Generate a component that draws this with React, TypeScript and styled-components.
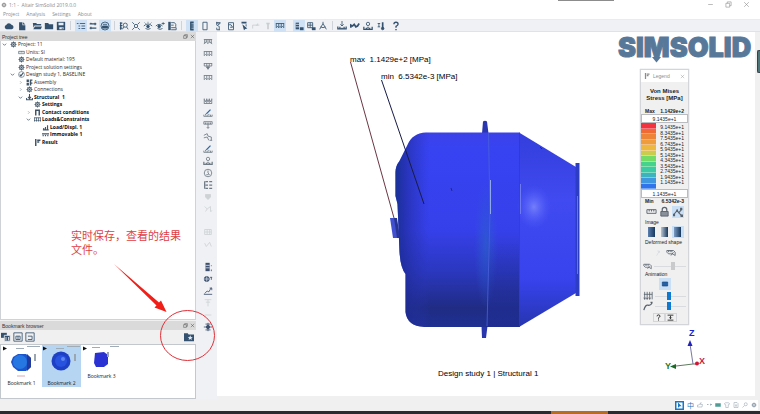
import React from 'react';
import styled, { createGlobalStyle, css } from 'styled-components';

const sans = '"Liberation Sans", Arial, sans-serif';
const ui = '"Open Sans", "Noto Sans", sans-serif';
const navy = '#34526f';

const GlobalStyle = createGlobalStyle`
  *, *::before, *::after { box-sizing: border-box; }
  html, body { margin: 0; background: #fff; }
  button, input { font: inherit; color: inherit; margin: 0; }
  ul, h1, h2, p { margin: 0; padding: 0; list-style: none; font-weight: inherit; font-size: inherit; }
`;

/* ---------- icons, all on a 12 x 12 grid ---------- */

const coil = 'M1 3h10M1.5 3v5l1.500-1.500L4.500 8V3M4.500 8 6 6.500 7.500 8V3M7.500 8 9 6.500 10.500 8V3';
const icons: Record<string, React.ReactNode> = {
  cloud: <path fill="currentColor" stroke="none" d="M3 10a2.700 2.700 0 0 1-.3-5.200A3.500 3.500 0 0 1 9 4.500 2.800 2.800 0 0 1 9.300 10z" />,
  file: <path fill="currentColor" stroke="none" d="M2.500 1.500h4v3.500h3.500v6H2.500zM7.300 1.500 10 4.200H7.300z" />,
  open: <path fill="currentColor" stroke="none" d="M1 2.500h4l1 1h5v2H3L1.800 8zM3.500 6.500H12L10.500 10H1.500z" />,
  folder: <path fill="currentColor" stroke="none" d="M1 2.500h4l1 1.300h5V10H1z" />,
  save: <><path fill="currentColor" stroke="none" d="M1 1h10v10H1z" /><path fill="#e6eff7" stroke="none" d="M3 2h6v3H3zM4 7.500h5V10H4z" /><path d="M7.500 8v2" /></>,
  list: <path d="M1 3h2M4.500 3H11M3 6h2M6.500 6H11M3 9h2M6.500 9H11" />,
  swap: <path strokeWidth="1.400" d="M2 3.500h8M8.500 2v3M2 8.500h8M3.500 7v3M4.500 3.500 3 2.500" />,
  display: <><circle cx="6" cy="6" r="4.800" /><path fill="currentColor" d="M3 6h6v2.500H3z" /><path d="M3.500 4h5" /></>,
  lens: <><path strokeWidth="1.400" d="M2 1.500v9M1 2.500h3M1 5.500h3M1 8.500h3" /><circle cx="7.500" cy="5" r="2.500" /><path d="m9 7 2 3M4 10l2-3" /></>,
  cross: <><path d="M1.500 1.500 4 4M10.500 1.500 8 4M1.500 10.500 4 8M10.500 10.500 8 8" /><circle cx="6" cy="6" r="2" /></>,
  eye: <><path d="M1 6q5-5 10 0M3 9q3 2 6 0M3 3l-1-1M6 2V1M9 3l1-1" /><circle cx="6" cy="6.500" r="1.600" fill="currentColor" /></>,
  eyeArrow: <><path d="M1 6q4-4 8 0M3 9q3 2 6 0M8 3h3M9.500 1.500 11 3 9.500 4.500" /><circle cx="5" cy="6.500" r="1.600" fill="currentColor" /></>,
  sheet: <><path fill="currentColor" stroke="none" d="M1.500 1h3v10h-3z" /><path d="M5 2h4l1.500 2v3M5 10.500h6V8H5M5 5h3" /></>,
  spring: <path strokeWidth="1.600" d="M4 1.500h4M4 3.700h4M4 6h4M4 8.300h4M4 10.500h4M4.500 1v10" />,
  column: <path d="M3.500 1.500h5v9h-5z" />,
  stack: <><path fill="currentColor" stroke="none" d="M4 1.500h5v1.500H4z" /><path d="M4.500 1v4l3 1.500V11M8.500 3 6 4.500M8 10.500H4.500V8" /></>,
  probe: <path d="M3 2h6v8.500H3zM3 4.500h3l2 3H5" />,
  pick: <path fill="currentColor" stroke="none" d="M3 1h6v2H3zM4 4l6 5-2.500.5L6 11zM8 4h1v3L8 6z" />,
  faint: <path d="M2 9V5h6V3M6 5h4" />,
  faintBar: <path strokeWidth="2" d="M6 2v8M4 3h4" />,
  coil: <path d={coil} />,
  tall: <path d="M1.500 3v5.500M4.500 3v5.500M7.500 3v5.500M10.500 3v5.500M1 9h10M1.500 4 3 7l1.500-3L6 7l1.500-3L9 7l1.500-3" />,
  load: <><path fill="currentColor" stroke="none" d="M2 2h4v8H2z" /><path stroke="#dce9f5" d="M2 4h4M2 7h4" /><path fill="currentColor" stroke="none" d="M7 7.500h4.500V11H7z" /></>,
  loadAlt: <><path d="M2 2h6v6H2zM2 5h6M5 2v6" /><path fill="currentColor" stroke="none" d="M7 7.500h4.500V11H7z" /></>,
  compass: <path d="M6 1v2M6 3 2 10M6 3l4 7M3 7q3 2 6 0" />,
  gravity: <><path d="M6 0v6M4 4l2 2 2-2" /><path strokeWidth="1.500" d="M1 6.500v3h10v-3M3.500 7v2M6 8v2M8.500 7v2" /></>,
  wave: <path strokeWidth="2" d="M1 8V5l2 1 2-2 2 3 2-1 2-3" />,
  gearLoad: <><circle cx="6" cy="3.500" r="2" /><path strokeWidth="1.500" d="M1 7v3h10V7M4 8v2M6 7v2M8 8v2" /></>,
  thermo: <><path strokeWidth="2" d="M8 1.500V9" /><circle cx="8" cy="9" r="1.500" fill="currentColor" /><path d="M2 3h3M3.500 3v4M2 7h3" /></>,
  help: <><path strokeWidth="1.600" d="M3.500 4q0-2.500 2.500-2.500T8.500 4Q8.500 5.200 6 6.500V8" /><path strokeWidth="1.700" d="M6 9.500v1.600" /></>,
  drop: <><path d="M1 3h10M1.500 3v3h9V3M4.500 3v3M7.500 3v3" /><path fill="currentColor" d="m4 7 2 3 2-3z" /></>,
  ground: <path d="M1 3h10M2 3v5M4 3v3M6 3v4M8 3v3M10 3v5M1 8l3-2 2 2 2-2 3 2" />,
  bolt: <><path d="M1 8v2h10V8M3 7v2M5 8v2M7 7v2M9 8v2" /><path stroke="#2b64a5" strokeWidth="1.500" d="M4 7l5-5" /></>,
  pin: <path d="M1 2h10v3H1zM3 3v2M5 3v2M7 3v2M9 3v2M6 5v5M4.500 8.500 6 10l1.500-1.500" />,
  hinge: <path d="M1 4l4-2 1 3 4 1v4M1 7l4-1 2 4M8 10h3" />,
  ring: <><circle cx="6" cy="6" r="4.500" /><path d="M6 3v3l2 2M4 8h3" /></>,
  rows: <path strokeWidth="1.500" d="M2 1.500v9M3 2h3M3 6h3M3 10h3M7.500 2H11M7.500 6H11M7.500 10H11" />,
  shield: <path fill="currentColor" d="M3 3h6v3L6 9 3 6z" />,
  sketch: <path d="M2 3l3 3-2 3M5 6l4-3v6l2-1" />,
  grid: <path d="M2 3h8v6H2zM5 3v6M8 3v6M2 6h8" />,
  tick: <path d="M2 5l2 4 4-5 2 5" />,
  result: <><path fill="currentColor" stroke="none" d="M3 1h5v10H3z" /><path stroke="#dbe5f0" d="M3 4h5M3 7h5" /><path d="M10 4v1M10 9v2" /></>,
  globe: <><circle cx="4.500" cy="6" r="3" fill="currentColor" /><path stroke="#c9d5e6" d="M1.500 6h6M4.500 3v6" /><path d="M8.500 4H11M10 4v3" /></>,
  graph: <path d="M1 10h10M2 9l3-3 2 1 3-5M8 2.500h2.500V5" />,
  tee: <path d="M2 2h8M6 2v8M3.500 5h5" />,
  dash: <path d="M2 6h8" />,
  target: <><circle cx="6" cy="6" r="2" fill="currentColor" /><path d="M6 1v10M1 6h10M3 2.500h6M3 9.500h6" /></>,
  gear: <><circle cx="6" cy="6" r="3.200" strokeWidth="1.800" /><circle cx="6" cy="6" r="1" fill="currentColor" /><path d="M6 .5v2M6 9.500v2M.5 6h2M9.500 6h2M2 2l1.500 1.500M8.500 8.500 10 10M10 2 8.500 3.500M3.500 8.500 2 10" /></>,
  ruler: <path d="M1 4h10v4H1zM3.500 4v2M6 4v2M8.500 4v2" />,
  study: <><circle cx="6" cy="6" r="5" /><path strokeWidth="2" d="m3 6 2 2.500L9 3" /></>,
  parts: <path fill="currentColor" stroke="none" d="M1 1h4v4H1zM1 6.500h4V11H1zM6.500 1H11v2H9v3h2v2H9v3H6.500z" />,
  anchor: <path strokeWidth="1.800" d="M6 0v8M3.500 5 6 8l2.500-3M1 7v3h10V7" />,
  contact: <path strokeWidth="2.500" d="M3 1v10M9 1v10M3 2h6" />,
  loads: <path strokeWidth="1.300" d="M0 3h12M1 3v6M4.300 3v6M7.600 3v6M11 3v6M0 7l1 2 1-2M3.300 7l1 2 1-2M6.600 7l1 2 1-2M10 7l1 2 1-2" />,
  bars: <path strokeWidth="2" d="M1.500 10h10M3 9V7M6 9V5M9.500 9V2" />,
  fixed: <path strokeWidth="2" d="M0 5h12M1 8h2M5 8h2M9 8h2" />,
  flag: <path strokeWidth="2.500" d="M3 0v12M5.500 2H11M5.500 5H9" />,
  copy: <><path fill="currentColor" stroke="none" d="M0 1h7v6H0z" /><path fill="currentColor" stroke="#eee" d="M4 4h7v7H4z" /><path stroke="#eee" d="M6 6v4M9 6v4" /></>,
  windowFull: <path d="M1 1h10v10H1zM3.500 5h5v4h-5zM6 5v4" />,
  windowPart: <path d="M1 1h10v10H1zM3.500 5h5M8.500 5v4M3.500 9h5" />,
  camera: <><path fill="currentColor" stroke="none" d="M0 1.500h4.500l1 1.500H12v8H0z" /><path fill="#dce9f5" stroke="none" d="m7.500 4 .9 2 2.100.2-1.600 1.300.5 2-1.900-1.100-1.900 1.100.5-2L4.500 6.200l2.100-.2z" /></>,
  lock: <><path strokeWidth="1.300" d="M3.500 6V4a2.500 2.500 0 0 1 5 0v2" /><path d="M2 6h8v5H2z" fill="#89909a" /></>,
  nodes: <><path strokeWidth="1.300" d="M1 9 5 4l2 3 4-5M7 7l3 3" /><path fill="currentColor" stroke="none" d="M8.500 1H11v3H8.500zM9 9h3v3H9zM0 8h2.500v3H0zM4 3h2v2H4z" /></>,
  deform: <path d="M1 3h8l2 2v4L8 7H3L1 5zM3 3v2M5 3v2M7 3v2M6 9l3-4" />,
  ghost: <path stroke="#d5d7da" d="M4 10 8 3M5 3h3v3" />,
  arrows: <path d="M2 1v9M5 1v9M8 1v9M11 1v9M1 4h10M1 8l1 2 1-2M4 8l1 2 1-2M7 8l1 2 1-2" />,
  curve: <path strokeWidth="1.500" d="M1 11q2-7 5-6t5-3M9 1.500h2.500" />,
  stop: <path fill="#2561a6" stroke="#17457d" d="M2 3h8v6H2z" />,
  down: <path strokeWidth="1.500" d="M1 2h10M6 3v5M4 6l2 2 2-2M1 10.500h10" />,
  restore: <path d="M1.500 4h6.500v6.500H1.500zM4 4V1.500h6.500V8H8" />,
  close: <path d="m2 2 8 8M10 2l-8 8" />,
  minimize: <path d="M2 6h8" />,
  chevronDown: <path strokeWidth="1.800" d="m2 4 4 4 4-4" />,
  chevronRight: <path d="m5 3 3 3-3 3" />,
  cursor: <><path fill="#1978c2" stroke="none" d="M0 0h12v12H0z" /><path fill="#fff" stroke="none" d="M2 2h8v8H2z" /><path fill="#1978c2" stroke="none" d="m4 2 5 5H6.500L4 9z" /></>,
  thumb: <path d="M1 10h9l1-5H7l1-4-4 5H1z" />,
  quote: <path strokeWidth="1.500" d="M2 5h3M8 4h1v3M11 4v2" />,
  keyboard: <path fill="#4f9d94" stroke="#4f9d94" d="M1 3h10v6H1z" />,
  shirt: <path d="m4 1-3 2 1.500 3 1-.5V11h5V5.500l1 .5L11 3 8 1Q6 3 4 1z" />,
  doc: <path d="M3 1h5l2 2v8H2V1zM4 6h4M4 8h4" />,
  search: <><circle cx="7.500" cy="4.500" r="3" /><path d="m5 7-4 4" /></>,
};

const Svg = styled.svg<{ $size: number }>`
  display: block;
  flex: none;
  width: ${p => p.$size}px;
  height: ${p => p.$size}px;
  fill: none;
  stroke: currentColor;
`;
const Icon = ({ name, size = 10 }: { name: string; size?: number }) => (
  <Svg viewBox="0 0 12 12" $size={size} aria-hidden="true">{icons[name]}</Svg>
);

/* ---------- window frame ---------- */

const Window = styled.div`
  position: relative;
  display: flex;
  flex-direction: column;
  min-height: 100vh;
  background: #f0f0f0;
  font-family: ${ui};
  font-size: 5px;
  line-height: 8px;
  color: #1c1c1c;
`;
const TitleBar = styled.header`
  display: flex;
  align-items: center;
  gap: 2px;
  height: 9px;
  padding: 0 10px 0 1px;
  background: #fff;
  color: #8c8c8c;
`;
const Title = styled.h1`
  flex: 1;
  white-space: pre;
`;
const WindowButtons = styled.div`
  display: flex;
  gap: 11px;
`;
const PlainButton = styled.button`
  display: grid;
  place-items: center;
  padding: 0;
  border: 0;
  background: none;
`;
const MenuBar = styled.nav`
  display: flex;
  align-items: center;
  gap: 7px;
  height: 10px;
  padding-left: 3px;
  background: #fff;
  color: #8c8c8c;
`;
const ToolBar = styled.div`
  display: flex;
  align-items: center;
  height: 13px;
  border-top: 1px solid #e4edf5;
  border-bottom: 1px solid #d9e4ee;
  background: #eff1f4;
`;
const ToolGroup = styled.div<{ $lead?: number; $gap?: number }>`
  display: flex;
  gap: ${p => p.$gap ?? 0}px;
  margin-left: ${p => p.$lead ?? 0}px;
`;
const Separator = styled.span`
  width: 1px;
  height: 9px;
  margin: 0 3px;
  background: #cdd3d9;
`;
const ToolButton = styled(PlainButton)<{ $active?: boolean; $faded?: boolean }>`
  width: 12px;
  height: 12px;
  color: ${p => (p.$faded ? '#c9ccd0' : navy)};
  ${p => p.$active && css`background: #cfe2f5;`}
`;

/* "*" marks a pressed tool, "-" a disabled one */
const Tools = ({ list }: { list: string[] }) => (
  <>
    {list.map((entry, i) => {
      const name = entry.replace(/^[*-]/, '');
      return (
        <ToolButton key={i} $active={entry[0] === '*'} $faded={entry[0] === '-'} disabled={entry[0] === '-'} aria-label={name}>
          <Icon name={name} />
        </ToolButton>
      );
    })}
  </>
);

const Main = styled.main`
  flex: 1;
  display: grid;
  grid-template-columns: 196px 21px minmax(0, 1fr) 5px;
`;

/* ---------- docked panels ---------- */

const Sidebar = styled.aside`
  position: relative;
  display: flex;
  flex-direction: column;
  min-height: 0;
`;
const PanelHeader = styled.header`
  display: flex;
  align-items: center;
  gap: 2px;
  height: 9px;
  padding: 0 1px 0 2px;
  background: #dadada;
  color: #333;
  font-family: ${sans};
`;
const PanelTitle = styled.h2`
  flex: 1;
`;
const TreePanel = styled.section`
  flex: 1;
  margin-bottom: 1px;
  border: 1px solid #cfd3d8;
  border-top: 0;
  background: #fff;
`;
const Tree = styled.ul`
  display: grid;
  grid-template-rows: repeat(14, 1fr);
  height: 105px;
`;
const TreeItem = styled.li<{ $depth: number; $bold?: boolean }>`
  display: grid;
  grid-template-columns: 8px 9px auto;
  justify-content: start;
  align-items: center;
  min-height: 0;
  padding-left: ${p => p.$depth * 8}px;
  line-height: 7px;
  white-space: pre;
  font-weight: ${p => (p.$bold ? 700 : 400)};
  color: ${p => (p.$bold ? '#0c0c0c' : '#2a2a2a')};
`;
const TreeSlot = styled.span`
  padding-left: 1px;
  color: #3f5468;
`;

type Node = [depth: number, arrow: '' | 'chevronDown' | 'chevronRight', icon: string, label: string, bold?: boolean];
const nodes: Node[] = [
  [0, 'chevronDown', 'gear', 'Project: 11'],
  [1, '', 'ruler', 'Units: SI'],
  [1, '', 'gear', 'Default material: 195'],
  [1, '', 'gear', 'Project solution settings'],
  [1, 'chevronDown', 'study', 'Design study 1, BASELINE'],
  [2, 'chevronRight', 'parts', 'Assembly'],
  [2, 'chevronRight', 'gear', 'Connections'],
  [2, 'chevronDown', 'anchor', 'Structural  1', true],
  [3, '', 'gear', 'Settings', true],
  [3, 'chevronRight', 'contact', 'Contact conditions', true],
  [3, 'chevronDown', 'loads', 'Loads&Constraints', true],
  [4, '', 'bars', 'Load/Displ. 1', true],
  [4, '', 'fixed', 'Immovable 1', true],
  [3, '', 'flag', 'Result', true],
];

const BookmarkTools = styled.div`
  display: flex;
  align-items: center;
  gap: 2px;
  height: 14px;
  padding: 0 2px 0 1px;
  color: ${navy};
`;
const Spacer = styled.span`
  flex: 1;
`;
const Bookmarks = styled.ul`
  display: flex;
  align-items: flex-start;
  gap: 1px;
  height: 55px;
  padding: 0 1px;
  border: 1px solid #c3c8ce;
  background: #fff;
`;
const Bookmark = styled.li<{ $selected?: boolean }>`
  width: 39px;
  background: ${p => (p.$selected ? '#b5d5f3' : 'transparent')};
`;
const BookmarkButton = styled(PlainButton)`
  width: 100%;
`;
const Thumb = styled.svg<{ $short?: boolean }>`
  display: block;
  width: 39px;
  height: ${p => (p.$short ? 27 : 34)}px;
`;

const Annotation = styled.div`
  position: absolute;
  left: 71px;
  bottom: 143px;
  width: 112px;
  color: #dc3f45;
  font-family: "Noto Sans CJK SC", sans-serif;
  font-size: 11px;
  line-height: 14px;
  pointer-events: none;
`;
const AnnotationMarks = styled.svg`
  position: absolute;
  left: 110px;
  bottom: 35px;
  width: 108px;
  height: 104px;
  z-index: 2;
  overflow: visible;
  pointer-events: none;
`;

const SideTools = styled.div`
  display: flex;
  flex-direction: column;
  align-items: center;
  gap: 11px;
  padding: 4px 0 0 2px;
  background: #eff1f4;
`;
const SideGroup = styled.div`
  ${ToolButton} { color: #707a84; }
  ${ToolButton}:disabled { color: #cfd2d5; }
  &:last-child ${ToolButton}:enabled { color: #3d4f6c; }
`;

/* ---------- viewport ---------- */

const Viewport = styled.section`
  position: relative;
  margin-bottom: 3px;
  background: #fff;
`;
const Scene = styled.svg`
  position: absolute;
  inset: 0;
  width: 100%;
  height: 100%;
  font-family: ${sans};
`;
const EdgeStrip = styled.div`
  display: flex;
  align-items: flex-start;
  justify-content: flex-end;
  padding-top: 18px;
`;
const EdgeHandle = styled.span`
  width: 3px;
  height: 23px;
  border: 1px solid #38414a;
  border-right: 0;
  border-radius: 2px 0 0 2px;
  background: #4f7478;
`;

const Legend = styled.section`
  position: absolute;
  top: 37px;
  right: 66px;
  width: 49px;
  border: 1px solid #d3d5d9;
  background: #f0f0f1;
  box-shadow: 0 0 1px #b9bdc2;
  font-family: ${sans};
  line-height: 6px;
`;
const LegendHeader = styled.header`
  display: flex;
  align-items: center;
  gap: 3px;
  height: 12px;
  padding: 0 3px;
  background: #fff;
  color: #8c8c8c;
`;
const LegendTitle = styled.h2`
  padding: 6px 0;
  text-align: center;
  font-size: 6px;
  line-height: 7px;
  font-weight: 700;
`;
const Extreme = styled.p`
  display: flex;
  justify-content: space-between;
  padding: 0 4px;
  font-weight: 700;
`;
const LimitInput = styled.input`
  display: block;
  width: 100%;
  height: 9px;
  padding: 0;
  border: 1px solid #b9bcc0;
  background: #fff;
  text-align: center;
`;
const Scale = styled.div`
  display: grid;
  grid-template-columns: 15px 1fr;
  grid-template-rows: 66px;
`;
const Swatches = styled.div`
  display: flex;
  flex-direction: column;
`;
const Swatch = styled.span<{ $color: string }>`
  flex: 1;
  border-bottom: 1px solid rgba(255, 255, 255, .35);
  background: ${p => p.$color};
`;
const Values = styled.ul`
  display: grid;
  grid-template-rows: repeat(11, minmax(0, 1fr));
  padding: 2px 4px 3px 0;
  line-height: 5px;
  text-align: right;
`;
const LegendRow = styled.div<{ $height: number; $gap?: number }>`
  display: flex;
  align-items: center;
  justify-content: center;
  gap: ${p => p.$gap ?? 0}px;
  height: ${p => p.$height}px;
  padding: 0 2px;
  color: #59636d;
`;
const LegendButton = styled(PlainButton)<{ $active?: boolean }>`
  width: 12px;
  height: 12px;
  background: ${p => (p.$active ? '#c9dff5' : 'transparent')};
`;
const ShadeButton = styled(LegendButton)<{ $to: string }>`
  &::before {
    content: '';
    width: 7px;
    height: 10px;
    background: linear-gradient(90deg, ${p => p.$to}, #17375d);
  }
`;
const Caption = styled.p`
  padding-left: 4px;
  color: #222;
`;
const Slider = styled.input<{ $color: string }>`
  flex: 1;
  min-width: 0;
  height: 9px;
  appearance: none;
  background: linear-gradient(#d9dbde, #d9dbde) center / 100% 1px no-repeat;
  &::-webkit-slider-thumb {
    appearance: none;
    width: 4px;
    height: 8px;
    background: ${p => p.$color};
  }
`;
const FooterButton = styled(LegendButton)`
  height: 9px;
  border: 1px solid #d3d5d9;
  color: #222;
`;

const swatches = ['#f2323f', '#ef6a35', '#ee8438', '#ef9c3c', '#edb840', '#c9cc4c', '#74dc66', '#45d38b', '#3ccaa4', '#3db4bd', '#3f97e0', '#2f74ea'];
const values = ['9.1435e+1', '8.3435e+1', '7.5435e+1', '6.7435e+1', '5.9435e+1', '5.1435e+1', '4.3435e+1', '3.5435e+1', '2.7435e+1', '1.9435e+1', '1.1435e+1'];

const LegendPanel = () => (
  <Legend aria-label="Legend">
    <LegendHeader>
      <Icon name="flag" size={6} />
      <span>Legend</span>
      <Spacer />
      <PlainButton aria-label="Close legend"><Icon name="close" size={5} /></PlainButton>
    </LegendHeader>
    <LegendTitle>Von Mises<br />Stress [MPa]</LegendTitle>
    <Extreme><span>Max</span><span>1.1429e+2</span></Extreme>
    <LimitInput aria-label="Upper limit" defaultValue="9.1435e+1" />
    <Scale>
      <Swatches>{swatches.map(c => <Swatch key={c} $color={c} />)}</Swatches>
      <Values>{values.map(v => <li key={v}>{v}</li>)}</Values>
    </Scale>
    <LimitInput aria-label="Lower limit" defaultValue="1.1435e+1" />
    <Extreme><span>Min</span><span>6.5342e-3</span></Extreme>
    <LegendRow $height={15} $gap={1}>
      <LegendButton aria-label="Range"><Icon name="ruler" size={11} /></LegendButton>
      <LegendButton aria-label="Lock"><Icon name="lock" size={11} /></LegendButton>
      <LegendButton $active aria-label="Show extremes"><Icon name="nodes" /></LegendButton>
    </LegendRow>
    <Caption>Image</Caption>
    <LegendRow $height={14} $gap={1}>
      <ShadeButton $to="#5a7fae" aria-label="Solid" />
      <ShadeButton $to="#b9c6d4" aria-label="Bands" />
      <ShadeButton $active $to="#7a9cc4" aria-label="Smooth" />
    </LegendRow>
    <Caption>Deformed shape</Caption>
    <LegendRow $height={16} $gap={1}>
      <LegendButton disabled aria-label="Undeformed"><Icon name="ghost" size={8} /></LegendButton>
      <LegendButton aria-label="Deformed"><Icon name="deform" /></LegendButton>
    </LegendRow>
    <LegendRow $height={10} $gap={2}>
      <Icon name="deform" size={9} />
      <Slider type="range" $color="#c9cacc" defaultValue={60} disabled aria-label="Deformation scale" />
    </LegendRow>
    <Caption>Animation</Caption>
    <LegendRow $height={14}>
      <LegendButton $active aria-label="Stop"><Icon name="stop" size={8} /></LegendButton>
    </LegendRow>
    <LegendRow $height={10} $gap={2}>
      <Icon name="arrows" size={10} />
      <Slider type="range" $color="#0f78d0" defaultValue={44} aria-label="Amplitude" />
    </LegendRow>
    <LegendRow $height={10} $gap={2}>
      <Icon name="curve" size={10} />
      <Slider type="range" $color="#0f78d0" defaultValue={44} aria-label="Speed" />
    </LegendRow>
    <LegendRow $height={13}>
      <FooterButton aria-label="Help"><Icon name="help" size={7} /></FooterButton>
      <FooterButton aria-label="Export"><Icon name="down" size={7} /></FooterButton>
    </LegendRow>
  </Legend>
);

const Model = () => (
  <Scene viewBox="217 32 538 364" role="img" aria-label="Von Mises stress on the drum">
    <defs>
      <linearGradient id="drum" x1="0" y1="0" x2="0" y2="1">
        <stop offset="0" stopColor="#3c41e8" />
        <stop offset=".08" stopColor="#3743f2" />
        <stop offset=".5" stopColor="#3640ea" />
        <stop offset=".72" stopColor="#2a37bd" />
        <stop offset=".9" stopColor="#202c84" />
        <stop offset="1" stopColor="#1e3092" />
      </linearGradient>
      <linearGradient id="edge" x1="0" y1="0" x2="1" y2="0">
        <stop offset="0" stopColor="#14308c" stopOpacity=".9" />
        <stop offset=".25" stopColor="#1c2a92" stopOpacity=".65" />
        <stop offset=".7" stopColor="#2430a8" stopOpacity=".3" />
        <stop offset="1" stopColor="#2a36c0" stopOpacity="0" />
      </linearGradient>
      <linearGradient id="cone" x1="0" y1="0" x2="0" y2="1">
        <stop offset="0" stopColor="#333edc" />
        <stop offset=".35" stopColor="#404af0" />
        <stop offset=".75" stopColor="#3843ee" />
        <stop offset="1" stopColor="#2635b0" />
      </linearGradient>
      <linearGradient id="shade" x1="0" y1="0" x2="0" y2="1">
        <stop offset="0" stopColor="#2431a3" stopOpacity="0" />
        <stop offset="1" stopColor="#1f2c90" stopOpacity=".8" />
      </linearGradient>
      <radialGradient id="glow">
        <stop stopColor="#8a95ff" stopOpacity=".7" />
        <stop offset="1" stopColor="#5661ff" stopOpacity="0" />
      </radialGradient>
      <radialGradient id="band">
        <stop stopColor="#2a66c8" stopOpacity=".6" />
        <stop offset="1" stopColor="#2a5ed0" stopOpacity="0" />
      </radialGradient>
    </defs>
    <path fill="#4050d0" d="M390 218h6l4 20h-7z" />
    <path fill="#273590" d="M394 218h3l3 20h-3z" />
    <path fill="#2936ad" d="M483 121.500q2-1.500 4 0l1.500 12H482zM481.500 326h6L486 338h-4z" />
    <path fill="url(#drum)" d="M426 132.500H520V327H424q-17-1-18.500-15V274q-5-6-6-22l-2-48-2-8v-24q0-6 4-11l8-16q5-12 18.500-12.500z" />
    <path fill="url(#edge)" d="M430 132.500h-4q-13.500.5-18.500 12.500l-8 16q-4 5-4 11v24l2 8 2 48q1 16 6 22v38q1.500 14 18.500 15h6z" />
    <path fill="url(#cone)" d="M519 132.500 576 167V293L519 327z" />
    <ellipse cx="534" cy="207" rx="17" ry="22" fill="url(#glow)" />
    <ellipse cx="486" cy="245" rx="12" ry="65" fill="url(#band)" />
    <path fill="url(#shade)" d="M488 240h31v87h-31z" />
    <path fill="none" stroke="#4a62dc" strokeOpacity=".8" d="M488.500 133l1.500 80-3 113" />
    <path fill="none" stroke="#8ea8e8" d="M490.500 180v34" />
    <path fill="none" stroke="#7381f0" strokeOpacity=".9" d="M520.500 184v30" />
    <path fill="none" stroke="#293bc0" strokeOpacity=".6" d="M519.500 133v193" />
    <path fill="#2d3ec4" d="M575.500 163h4v133h-4z" />
    <path fill="none" stroke="#5480d4" d="M577.500 196v78" />
    <path fill="none" stroke="#1e2a80" d="m451 188 1 3M540 147l2 2" />
    <path fill="none" stroke="#6b3644" d="M350.500 62 394 218" />
    <path fill="none" stroke="#171b48" d="M381.500 80 424 204" />
    <g fontSize="8" fill="#000">
      <text x="350" y="62">max{'\u00a0 '}1.1429e+2 [MPa]</text>
      <text x="381" y="79">min{'\u00a0 '}6.5342e-3 [MPa]</text>
      <text x="438" y="376">Design study 1 | Structural 1</text>
    </g>
    <text x="618" y="57" fontSize="27" fontWeight="900" fill="#587899" stroke="#587899" fontFamily="Inter, sans-serif">SIMSOLID</text>
    <path fill="#587899" d="M652 57h9l-4.500 5.500z" />
    <path fill="none" stroke="#7777a5" d="m690 344 3 20" />
    <path fill="#2222b8" d="m690 340-2.500 6h5z" />
    <path fill="none" stroke="#5f7c5f" d="m693 364-21 2.500" />
    <path fill="#1a6b26" d="m670 366.500 6-2.500v5z" />
    <path stroke="#a05060" d="M693 364h4" />
    <circle cx="697" cy="363.500" r="2" fill="#d01535" />
    <g fontSize="9" fontWeight="700">
      <text x="689" y="336" fill="#2222c8">Z</text>
      <text x="665" y="369" fill="#1f7a2b">Y</text>
      <text x="699" y="364" fill="#cc1838">X</text>
    </g>
  </Scene>
);

/* ---------- status area ---------- */

const StatusBar = styled.footer`
  display: flex;
  justify-content: flex-end;
  align-items: center;
  height: 12px;
  padding-right: 2px;
`;
const Tray = styled.div`
  display: flex;
  align-items: center;
  gap: 3px;
  height: 10px;
  padding-right: 1px;
  background: #fff;
  color: #8a9aa6;
  font-family: "Noto Sans CJK SC", sans-serif;
  font-size: 7px;
  b { color: #2c79b8; font-weight: 400; }
`;
const TaskBar = styled.div`
  display: flex;
  justify-content: flex-end;
  height: 3px;
  padding-right: 20%;
  background: #2b2a2e;
`;
const ActiveTask = styled.span`
  width: 57px;
  background: #b86b25;
`;
const TopTab = styled.span`
  position: absolute;
  top: 0;
  right: 146px;
  width: 56px;
  height: 1px;
  background: #8c8c8c;
`;

const Ball = ({ kind }: { kind: number }) => (
  <Thumb viewBox="0 0 39 34" preserveAspectRatio="xMinYMin slice" $short={kind === 2} aria-hidden="true">
    <path d="m1 1.500 4 2-4 2z" fill="#111" />
    <path d={kind === 2 ? 'M10 2.500h8M28 1.500h9' : 'M14 3.500h8M25 1.500h13'} stroke="#a0abb8" fill="none" />
    {kind === 0 && (
      <>
        <path d="m11 12 5-3h8l5 4v9l-5 4h-8l-5-4-2-5z" fill="#1d55cc" />
        <circle cx="18" cy="17" r="7" fill="#2777e2" />
        <path d="M25 9l4 4v9l-4 4z" fill="#203a9e" />
        <path d="M15 31h8" stroke="#d9a8b0" />
      </>
    )}
    {kind === 1 && (
      <>
        <circle cx="19" cy="16" r="9.500" fill="#1e40c4" />
        <circle cx="19" cy="16" r="6" fill="#2852e0" />
        <circle cx="21" cy="14" r="2" fill="#5f86ee" />
      </>
    )}
    {kind === 2 && <path d="m13 8 9-1 4 3v9l-4 3h-8l-2-4z" fill="#2b32d4" />}
    <path d={kind === 2 ? 'M26 7v5' : 'M33 9v7'} stroke="#9ba6b0" strokeWidth="2" fill="none" />
  </Thumb>
);

export default function App() {
  return (
    <Window>
      <GlobalStyle />
      <TopTab />
      <TitleBar>
        <Icon name="gear" size={6} />
        <Title>{'1:1 -  Altair SimSolid 2019.0.0'}</Title>
        <WindowButtons>
          {['minimize', 'restore', 'close'].map(n => (
            <PlainButton key={n} aria-label={n}><Icon name={n} size={7} /></PlainButton>
          ))}
        </WindowButtons>
      </TitleBar>
      <MenuBar>
        {['Project', 'Analysis', 'Settings', 'About'].map(m => <PlainButton key={m}>{m}</PlainButton>)}
      </MenuBar>
      <ToolBar>
        <ToolGroup $lead={3} $gap={1}><Tools list={['cloud', 'file']} /></ToolGroup>
        <ToolGroup $lead={3}><Tools list={['open', 'folder', 'save']} /></ToolGroup>
        <Separator />
        <ToolGroup $lead={1}><Tools list={['*list', 'swap', '*display']} /></ToolGroup>
        <Separator />
        <ToolGroup><Tools list={['lens', 'cross', 'eye', 'eyeArrow', 'sheet']} /></ToolGroup>
        <Separator />
        <ToolGroup $lead={1} $gap={1}><Tools list={['*spring', 'column', 'stack', 'probe', 'pick']} /></ToolGroup>
        <ToolGroup><Tools list={['-faint', '-faintBar', '*coil']} /></ToolGroup>
        <ToolGroup $lead={7}><Tools list={['*load', 'loadAlt', 'compass']} /></ToolGroup>
        <Separator />
        <ToolGroup $gap={1}><Tools list={['gravity', 'wave', 'gearLoad', 'thermo']} /></ToolGroup>
        <ToolGroup $lead={3}><Tools list={['help']} /></ToolGroup>
      </ToolBar>
      <Main>
        <Sidebar>
          <PanelHeader>
            <PanelTitle>Project tree</PanelTitle>
            <PlainButton aria-label="Float"><Icon name="restore" size={5} /></PlainButton>
            <PlainButton aria-label="Close"><Icon name="close" size={5} /></PlainButton>
          </PanelHeader>
          <TreePanel>
            <Tree>
              {nodes.map(([depth, arrow, icon, label, bold]) => (
                <TreeItem key={label} $depth={depth} $bold={bold}>
                  <TreeSlot>{arrow && <Icon name={arrow} size={5} />}</TreeSlot>
                  <TreeSlot><Icon name={icon} size={7} /></TreeSlot>
                  <span>{label}</span>
                </TreeItem>
              ))}
            </Tree>
          </TreePanel>
          <PanelHeader>
            <PanelTitle>Bookmark browser</PanelTitle>
            <PlainButton aria-label="Float"><Icon name="restore" size={5} /></PlainButton>
            <PlainButton aria-label="Close"><Icon name="close" size={5} /></PlainButton>
          </PanelHeader>
          <BookmarkTools>
            {['copy', 'windowFull', 'windowPart'].map(n => (
              <PlainButton key={n} aria-label={n}><Icon name={n} size={10} /></PlainButton>
            ))}
            <Spacer />
            <PlainButton aria-label="Add bookmark"><Icon name="camera" size={10} /></PlainButton>
          </BookmarkTools>
          <Bookmarks>
            {[0, 1, 2].map(k => (
              <Bookmark key={k} $selected={k === 1}>
                <BookmarkButton><Ball kind={k} />{`Bookmark ${k + 1}`}</BookmarkButton>
              </Bookmark>
            ))}
          </Bookmarks>
          <Annotation>实时保存，查看的结果文件。</Annotation>
          <AnnotationMarks viewBox="110 260 108 104" aria-hidden="true">
            <path fill="#f01f18" d="m114 264 45 38.500 2-2 5.500 11.500-12-4.500 2-2z" />
            <ellipse cx="187.500" cy="335.500" rx="27" ry="25" fill="none" stroke="#e03038" />
          </AnnotationMarks>
        </Sidebar>
        <SideTools>
          <SideGroup><Tools list={['ground', 'coil', 'drop', 'coil']} /></SideGroup>
          <SideGroup><Tools list={['tall', 'bolt', 'pin', 'hinge', 'bolt', 'gearLoad', 'ring', 'rows', '-shield', '-sketch']} /></SideGroup>
          <SideGroup><Tools list={['-grid', '-tick']} /></SideGroup>
          <SideGroup><Tools list={['result', 'globe', 'graph', '-tee', '-dash', 'target']} /></SideGroup>
        </SideTools>
        <Viewport>
          <Model />
          <LegendPanel />
        </Viewport>
        <EdgeStrip><EdgeHandle /></EdgeStrip>
      </Main>
      <StatusBar>
        <Tray>
          <Icon name="cursor" size={9} />
          <b>中</b>
          {['thumb', 'quote', 'keyboard', 'shirt', 'doc', 'search', 'gear'].map(n => <Icon key={n} name={n} size={6} />)}
        </Tray>
      </StatusBar>
      <TaskBar><ActiveTask /></TaskBar>
    </Window>
  );
}
